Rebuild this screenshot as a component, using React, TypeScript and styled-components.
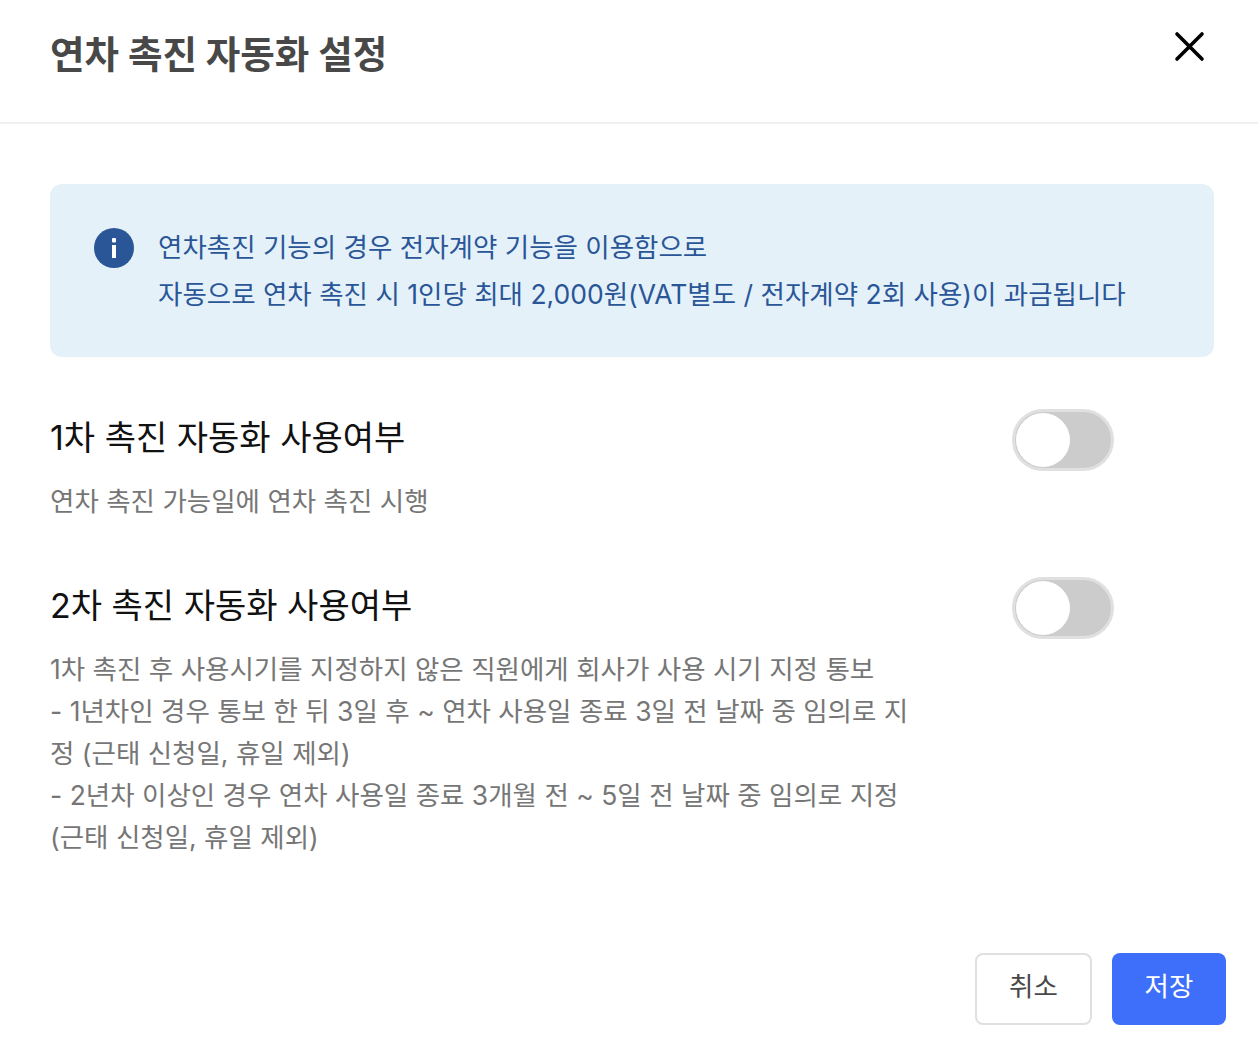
import React from 'react';
import styled, { createGlobalStyle } from 'styled-components';

const GlobalStyle = createGlobalStyle`
  html, body {
    margin: 0;
    padding: 0;
    background: #fff;
  }
  body {
    font-family: Inter, "Noto Sans CJK KR", sans-serif;
  }
`;

const Modal = styled.div`
  width: 1258px;
  height: 1048px;
  display: flex;
  flex-direction: column;
  overflow: hidden;
`;

const Header = styled.header`
  height: 122px;
  flex: none;
  display: flex;
  justify-content: space-between;
  align-items: flex-start;
  padding: 0 50px;
  border-bottom: 2px solid #f0f0f0;
`;

const Title = styled.h1`
  margin: 30px 0 0;
  font-size: 37.5px;
  line-height: 50px;
  font-weight: 700;
  color: #484848;
`;

const CloseButton = styled.button`
  margin: 25px -4px 0 0;
  padding: 0;
  width: 44px;
  height: 44px;
  border: 0;
  background: none;
  display: flex;
`;

const Body = styled.main`
  flex: 1;
  padding: 60px 44px 0 50px;
`;

const Notice = styled.div`
  height: 173px;
  box-sizing: border-box;
  padding: 40px 44px 0;
  display: flex;
  gap: 24px;
  background: #e4f1f9;
  border-radius: 12px;
  color: #2a5698;
`;

const NoticeIcon = styled.svg`
  flex: none;
  width: 40px;
  height: 40px;
  margin-top: 4px;
`;

const NoticeText = styled.p`
  margin: 0;
  font-size: 26.5px;
  line-height: 47px;
  white-space: pre-line;
`;

const Option = styled.section<{ $top: number }>`
  margin-top: ${(p) => p.$top}px;
  display: flex;
  justify-content: space-between;
  align-items: flex-start;
`;

const OptionCopy = styled.div`
  width: 880px;
`;

const OptionTitle = styled.h2`
  margin: 4px 0 0;
  font-size: 34px;
  line-height: 50px;
  font-weight: 400;
  color: #111;
`;

const OptionDesc = styled.p`
  margin: 17px 0 0;
  font-size: 26.5px;
  line-height: 42px;
  color: #767676;
  white-space: pre-line;
`;

const Toggle = styled.div`
  flex: none;
  width: 102px;
  height: 62px;
  margin: 0 100px 0 0;
  box-sizing: border-box;
  border: 3px solid #e0e0e0;
  border-radius: 31px;
  background: #cccccc;
  display: flex;
  align-items: center;
  padding-left: 1px;
`;

const Knob = styled.span`
  width: 54px;
  height: 54px;
  border-radius: 50%;
  background: #fff;
`;

const Footer = styled.footer`
  flex: none;
  display: flex;
  justify-content: flex-end;
  gap: 20px;
  padding: 0 32px 23px 0;
`;

const FooterButton = styled.button<{ $primary?: boolean }>`
  height: 72px;
  width: ${(p) => (p.$primary ? 114 : 117)}px;
  box-sizing: border-box;
  padding: 0 0 9px;
  border-radius: 8px;
  border: ${(p) => (p.$primary ? '0' : '2px solid #e0e0e0')};
  background: ${(p) => (p.$primary ? '#3e6ffa' : '#fff')};
  color: ${(p) => (p.$primary ? '#fff' : '#484848')};
  font-family: inherit;
  font-size: 26.5px;
`;

const options = [
  {
    top: 52,
    title: '1차 촉진 자동화 사용여부',
    desc: '연차 촉진 가능일에 연차 촉진 시행',
  },
  {
    top: 55,
    title: '2차 촉진 자동화 사용여부',
    desc: `1차 촉진 후 사용시기를 지정하지 않은 직원에게 회사가 사용 시기 지정 통보
- 1년차인 경우 통보 한 뒤 3일 후 ~ 연차 사용일 종료 3일 전 날짜 중 임의로 지
정 (근태 신청일, 휴일 제외)
- 2년차 이상인 경우 연차 사용일 종료 3개월 전 ~ 5일 전 날짜 중 임의로 지정
(근태 신청일, 휴일 제외)`,
  },
];

const App = () => {
  return (
    <Modal>
      <GlobalStyle />
      <Header>
        <Title>연차 촉진 자동화 설정</Title>
        <CloseButton aria-label="닫기">
          <svg width="44" height="44" viewBox="0 0 44 44">
            <path d="M9 9 L34 34 M34 9 L9 34" stroke="#000" strokeWidth="3.6" strokeLinecap="round" />
          </svg>
        </CloseButton>
      </Header>
      <Body>
        <Notice>
          <NoticeIcon viewBox="0 0 40 40">
            <circle cx="20" cy="20" r="20" fill="#2a5698" />
            <rect x="18" y="17" width="4" height="13" fill="#fff" />
            <rect x="18" y="10" width="4" height="4.4" rx="1" fill="#fff" />
          </NoticeIcon>
          <NoticeText>
            {`연차촉진 기능의 경우 전자계약 기능을 이용함으로
자동으로 연차 촉진 시 1인당 최대 2,000원(VAT별도 / 전자계약 2회 사용)이 과금됩니다`}
          </NoticeText>
        </Notice>
        {options.map((o) => (
          <Option key={o.title} $top={o.top}>
            <OptionCopy>
              <OptionTitle>{o.title}</OptionTitle>
              <OptionDesc>{o.desc}</OptionDesc>
            </OptionCopy>
            <Toggle>
              <Knob />
            </Toggle>
          </Option>
        ))}
      </Body>
      <Footer>
        <FooterButton>취소</FooterButton>
        <FooterButton $primary>저장</FooterButton>
      </Footer>
    </Modal>
  );
};

export default App;
